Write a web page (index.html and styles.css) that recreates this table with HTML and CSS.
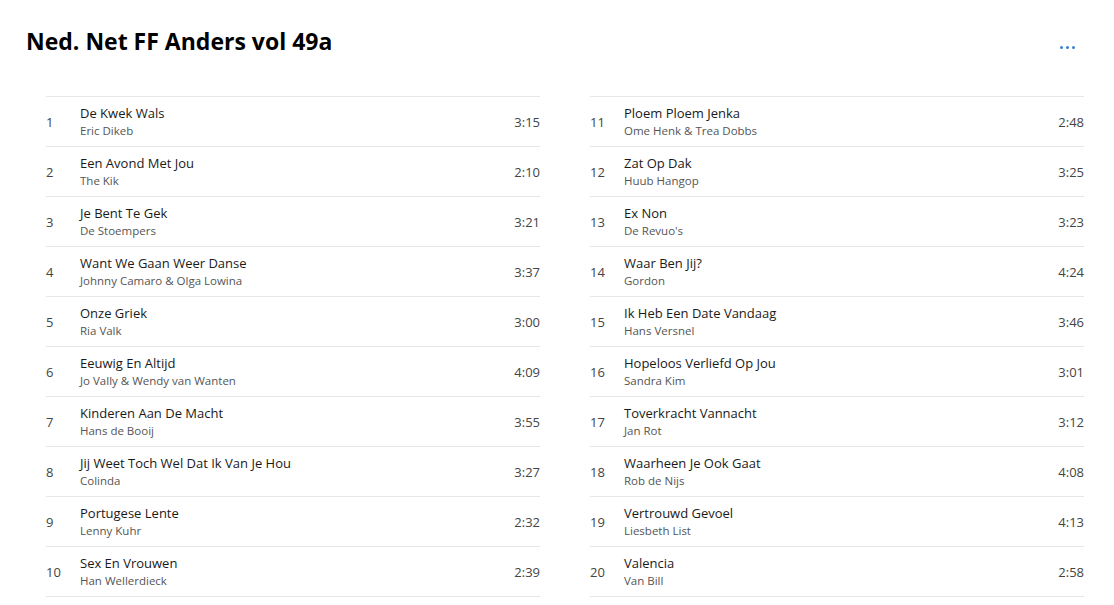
FILE: index.html
```html
<!DOCTYPE html>
<html>
<head>
<meta charset="utf-8">
<link rel="stylesheet" href="styles.css">
</head>
<body>
<div class="page">
  <header class="head">
    <h1 class="title">Ned. Net FF Anders vol 49a</h1>
    <button class="more" aria-label="Meer"><span></span><span></span><span></span></button>
  </header>
  <div class="cols">
    <ol class="list">
      <li class="row"><span class="num">1</span><div class="info"><div class="song">De Kwek Wals</div><div class="artist">Eric Dikeb</div></div><span class="dur">3:15</span></li>
      <li class="row"><span class="num">2</span><div class="info"><div class="song">Een Avond Met Jou</div><div class="artist">The Kik</div></div><span class="dur">2:10</span></li>
      <li class="row"><span class="num">3</span><div class="info"><div class="song">Je Bent Te Gek</div><div class="artist">De Stoempers</div></div><span class="dur">3:21</span></li>
      <li class="row"><span class="num">4</span><div class="info"><div class="song">Want We Gaan Weer Danse</div><div class="artist">Johnny Camaro &amp; Olga Lowina</div></div><span class="dur">3:37</span></li>
      <li class="row"><span class="num">5</span><div class="info"><div class="song">Onze Griek</div><div class="artist">Ria Valk</div></div><span class="dur">3:00</span></li>
      <li class="row"><span class="num">6</span><div class="info"><div class="song">Eeuwig En Altijd</div><div class="artist">Jo Vally &amp; Wendy van Wanten</div></div><span class="dur">4:09</span></li>
      <li class="row"><span class="num">7</span><div class="info"><div class="song">Kinderen Aan De Macht</div><div class="artist">Hans de Booij</div></div><span class="dur">3:55</span></li>
      <li class="row"><span class="num">8</span><div class="info"><div class="song">Jij Weet Toch Wel Dat Ik Van Je Hou</div><div class="artist">Colinda</div></div><span class="dur">3:27</span></li>
      <li class="row"><span class="num">9</span><div class="info"><div class="song">Portugese Lente</div><div class="artist">Lenny Kuhr</div></div><span class="dur">2:32</span></li>
      <li class="row"><span class="num">10</span><div class="info"><div class="song">Sex En Vrouwen</div><div class="artist">Han Wellerdieck</div></div><span class="dur">2:39</span></li>
    </ol>
    <ol class="list">
      <li class="row"><span class="num">11</span><div class="info"><div class="song">Ploem Ploem Jenka</div><div class="artist">Ome Henk &amp; Trea Dobbs</div></div><span class="dur">2:48</span></li>
      <li class="row"><span class="num">12</span><div class="info"><div class="song">Zat Op Dak</div><div class="artist">Huub Hangop</div></div><span class="dur">3:25</span></li>
      <li class="row"><span class="num">13</span><div class="info"><div class="song">Ex Non</div><div class="artist">De Revuo's</div></div><span class="dur">3:23</span></li>
      <li class="row"><span class="num">14</span><div class="info"><div class="song">Waar Ben Jij?</div><div class="artist">Gordon</div></div><span class="dur">4:24</span></li>
      <li class="row"><span class="num">15</span><div class="info"><div class="song">Ik Heb Een Date Vandaag</div><div class="artist">Hans Versnel</div></div><span class="dur">3:46</span></li>
      <li class="row"><span class="num">16</span><div class="info"><div class="song">Hopeloos Verliefd Op Jou</div><div class="artist">Sandra Kim</div></div><span class="dur">3:01</span></li>
      <li class="row"><span class="num">17</span><div class="info"><div class="song">Toverkracht Vannacht</div><div class="artist">Jan Rot</div></div><span class="dur">3:12</span></li>
      <li class="row"><span class="num">18</span><div class="info"><div class="song">Waarheen Je Ook Gaat</div><div class="artist">Rob de Nijs</div></div><span class="dur">4:08</span></li>
      <li class="row"><span class="num">19</span><div class="info"><div class="song">Vertrouwd Gevoel</div><div class="artist">Liesbeth List</div></div><span class="dur">4:13</span></li>
      <li class="row"><span class="num">20</span><div class="info"><div class="song">Valencia</div><div class="artist">Van Bill</div></div><span class="dur">2:58</span></li>
    </ol>
  </div>
</div>
</body>
</html>
```

FILE: styles.css
```css
* { box-sizing: border-box; }
html, body { margin: 0; padding: 0; background: #fff; }
body { font-family: "Open Sans", "Noto Sans", sans-serif; color: #1a1a1a; }
.page { padding: 25px 30px 0 26px; }
.head { display: flex; align-items: flex-start; justify-content: space-between; height: 71px; }
.title { margin: 0; font-size: 23px; line-height: 32px; font-weight: 700; color: #000; }
.more { margin: 21px 9px 0 0; padding: 0; border: 0; background: none; display: flex; gap: 3px; cursor: pointer; }
.more span { width: 3px; height: 3px; border-radius: 50%; background: #3b7fd1; }
.cols { display: grid; grid-template-columns: 494px 494px; gap: 50px; padding-left: 20px; }
.list { list-style: none; margin: 0; padding: 0; border-bottom: 1px solid #e6e6e6; }
.row { display: flex; align-items: center; height: 50px; border-top: 1px solid #e6e6e6; }
.num { width: 34px; font-size: 13px; color: #444; }
.info { flex: 1; display: flex; flex-direction: column; }
.song { font-size: 13px; line-height: 17px; color: #1a1a1a; }
.artist { font-size: 11.5px; line-height: 17px; color: #555; }
.dur { font-size: 13px; color: #444; }
```
